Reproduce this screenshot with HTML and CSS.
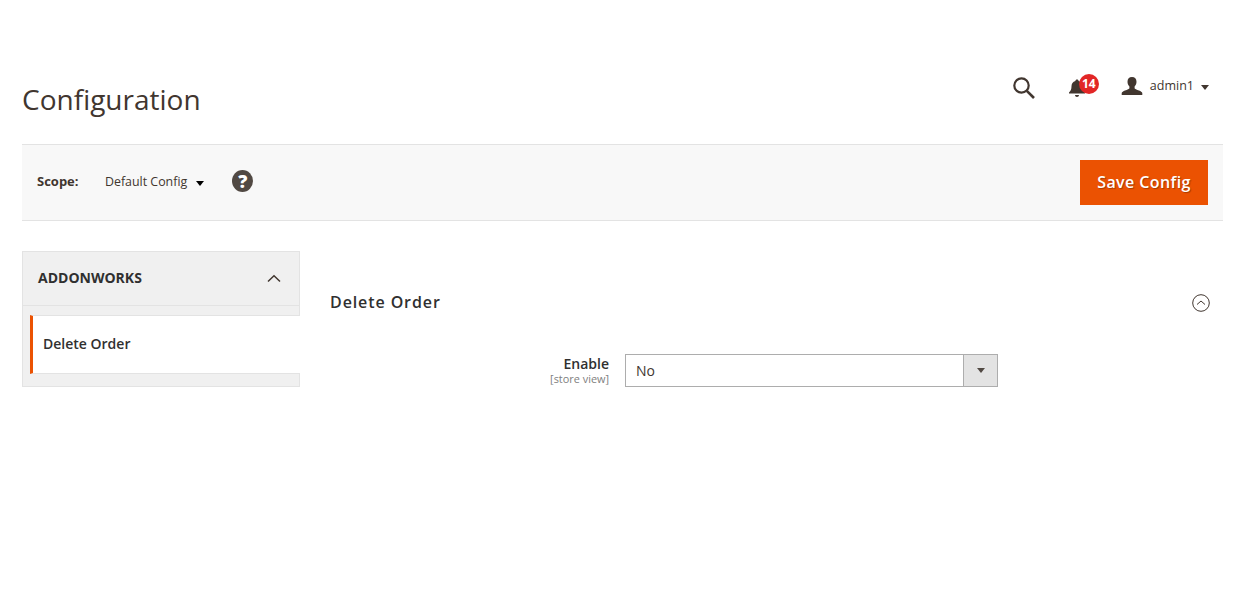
FILE: index.html
```html
<!DOCTYPE html>
<html lang="en">
<head>
<meta charset="utf-8">
<title>Configuration</title>
<link rel="stylesheet" href="styles.css">
</head>
<body>
<div class="page">
  <header class="top">
    <h1 class="title">Configuration</h1>
    <div class="actions">
      <svg class="search" width="24" height="24" viewBox="0 0 24 24"><circle cx="9.5" cy="9.5" r="7.2" fill="none" stroke="#41362f" stroke-width="2.2"/><path d="M14.8 14.8 22 22" stroke="#41362f" stroke-width="2.6" fill="none"/></svg>
      <div class="bell">
        <svg width="18" height="20" viewBox="0 0 18 20"><path d="M9 1.5c1 0 1.5.6 1.6 1.4 2.6.7 3.9 2.8 3.9 5.4 0 3.2.8 4.800 2.500 6.200v1H1v-1c1.700-1.400 2.500-3 2.500-6.200 0-2.600 1.300-4.700 3.900-5.400C7.500 2.100 8 1.500 9 1.500zM7 17h4c0 1.200-.9 2-2 2s-2-.8-2-2z" fill="#41362f"/></svg>
        <span class="badge">14</span>
      </div>
      <div class="user">
        <svg width="22" height="20" viewBox="0 0 22 20"><path d="M11 1c2.900 0 4.500 2 4.500 4.800 0 2-.8 3.700-1.900 4.800v1.600c0 .8 2.100 1.400 4.400 2.300 1.800.7 3 1.500 3.300 2.500v2H.7v-2c.3-1 1.500-1.800 3.300-2.500 2.300-.9 4.400-1.500 4.400-2.300v-1.600C7.300 9.500 6.500 7.800 6.500 5.800 6.500 3 8.100 1 11 1z" fill="#41362f"/></svg>
        <span class="user-name">admin1</span>
        <span class="caret"></span>
      </div>
    </div>
  </header>

  <div class="scope-bar">
    <div class="scope">
      <span class="scope-label">Scope:</span>
      <span class="scope-value">Default Config</span>
      <span class="caret caret-dark"></span>
      <span class="help">?</span>
    </div>
    <button class="save" type="button">Save Config</button>
  </div>

  <div class="columns">
    <aside class="side">
      <div class="side-head">
        <span class="side-title">ADDONWORKS</span>
        <svg width="14" height="9" viewBox="0 0 14 9"><path d="M1 7.500 7 1.700l6 5.800" fill="none" stroke="#41362f" stroke-width="1.500"/></svg>
      </div>
      <div class="side-body">
        <a class="side-item">Delete Order</a>
      </div>
    </aside>
    <main class="main">
      <div class="section-head">
        <h2 class="section-title">Delete Order</h2>
        <svg class="section-toggle" width="18" height="18" viewBox="0 0 18 18"><circle cx="9" cy="9" r="8.300" fill="none" stroke="#41362f" stroke-width="1"/><path d="M5 10.500 9 7l4 3.500" fill="none" stroke="#41362f" stroke-width="1"/></svg>
      </div>
      <div class="field">
        <div class="field-label">
          <span class="field-name">Enable</span>
          <span class="field-scope">[store view]</span>
        </div>
        <div class="select">
          <span class="select-value">No</span>
          <span class="select-btn"><span class="select-arrow"></span></span>
        </div>
      </div>
    </main>
  </div>
</div>
</body>
</html>
```
FILE: styles.css
```css
* { box-sizing: border-box; }
html, body { margin: 0; padding: 0; background: #fff; }
body { font-family: "Open Sans", sans-serif; color: #41362f; }
.page { width: 1244px; height: 597px; padding: 0 21px 0 22px; overflow: hidden; }

.top { height: 144px; display: flex; justify-content: space-between; position: relative; }
.title { margin: 80px 0 0; font-size: 28px; font-weight: 400; line-height: 38px; color: #41362f; }
.actions { display: flex; align-items: flex-start; padding-top: 74px; padding-right: 14px; }
.search { margin-top: 2px; margin-right: 32px; }
.bell { position: relative; width: 18px; height: 20px; margin-top: 4px; margin-right: 35px; }
.bell svg { display: block; }
.badge { position: absolute; left: 11px; top: -4px; width: 20px; height: 20px; border-radius: 50%; background: #e22626; color: #fff; font-size: 12px; font-weight: 700; line-height: 20px; text-align: center; }
.user { display: flex; align-items: center; height: 22px; margin-top: 1px; }
.user-name { margin-left: 7px; font-size: 12.500px; line-height: 22px; color: #41362f; }
.caret { display: block; width: 0; height: 0; margin-left: 7px; margin-top: 2px; border-style: solid; border-width: 5px 4.500px 0; border-color: #41362f transparent transparent; }

.scope-bar { height: 77px; background: #f8f8f8; border-top: 1px solid #e3e3e3; border-bottom: 1px solid #e3e3e3; display: flex; justify-content: space-between; align-items: center; padding: 0 15px; }
.scope { display: flex; align-items: center; padding-bottom: 4px; }
.scope-label { font-size: 13px; font-weight: 700; width: 68px; }
.scope-value { margin-top: 2px; font-size: 12.400px; color: #41362f; }
.caret-dark { margin-left: 9px; margin-top: 5px; border-color: #000 transparent transparent; }
.help { width: 21px; height: 22px; margin-left: 28px; border-radius: 50%; background: #514943; color: #fff; font-size: 18px; font-weight: 800; line-height: 22px; text-align: center; }
.save { width: 128px; height: 45px; padding: 0 0 2px; border: 0; background: #eb5202; color: #fff; font-family: "Open Sans", sans-serif; font-size: 16px; font-weight: 600; text-shadow: 1px 1px 1px rgba(0, 0, 0, .3); letter-spacing: .4px; }

.columns { display: flex; margin-top: 30px; }
.side { width: 278px; height: 136px; background: #f0f0f0; border: 1px solid #e3e3e3; display: flex; flex-direction: column; }
.side-head { height: 54px; padding: 0 18px 0 15px; display: flex; justify-content: space-between; align-items: center; border-bottom: 1px solid #e3e3e3; }
.side-title { margin-bottom: 2px; font-size: 14px; font-weight: 700; color: #303030; }
.side-body { padding-top: 9px; }
.side-item { display: block; height: 59px; margin-left: 7px; margin-right: -1px; padding-left: 10px; background: #fff; border-left: 3px solid #eb5202; border-top: 1px solid #e3e3e3; border-bottom: 1px solid #e3e3e3; font-size: 14px; font-weight: 600; line-height: 56px; color: #303030; }

.main { flex: 1; padding: 0 13px 0 30px; }
.section-head { display: flex; justify-content: space-between; align-items: center; height: 26px; margin-top: 38px; }
.section-title { margin: 0; font-size: 16px; font-weight: 600; letter-spacing: .9px; color: #303030; }
.section-toggle { margin-top: 2px; }
.field { display: flex; margin-top: 39px; }
.field-label { width: 280px; padding-right: 1px; display: flex; flex-direction: column; align-items: flex-end; }
.field-name { font-size: 14px; font-weight: 600; line-height: 20px; color: #303030; }
.field-scope { font-size: 10.900px; line-height: 10px; color: #808080; }
.select { width: 373px; height: 33px; margin-left: 15px; border: 1px solid #adadad; display: flex; justify-content: space-between; align-items: center; }
.select-value { padding-left: 10px; font-size: 14px; color: #41362f; }
.select-btn { width: 34px; height: 100%; background: #e3e3e3; border-left: 1px solid #adadad; display: flex; align-items: center; justify-content: center; }
.select-arrow { width: 0; height: 0; border-style: solid; border-width: 5px 4.500px 0; border-color: #514943 transparent transparent; }
```
